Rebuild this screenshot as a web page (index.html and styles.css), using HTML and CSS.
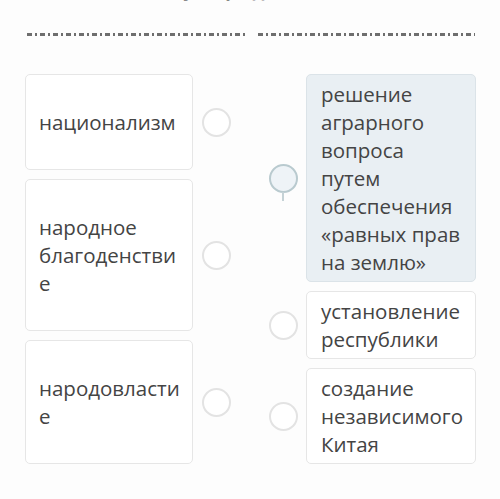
FILE: index.html
```html
<!DOCTYPE html>
<html lang="ru">
<head>
    <meta charset="UTF-8">
    <title>Сопоставьте</title>
    <link rel="stylesheet" href="styles.css">
</head>
<body>
    <div class="top">
        <div class="title">Сопоставьте утверждения</div>
        <div class="rule">
            <span class="dash"></span>
            <span class="dash"></span>
        </div>
    </div>
    <div class="board">
        <div class="column">
            <div class="row">
                <div class="card h1">национализм</div>
                <span class="dot"></span>
            </div>
            <div class="row">
                <div class="card h2">народное благоденствие</div>
                <span class="dot"></span>
            </div>
            <div class="row">
                <div class="card h3">народовластие</div>
                <span class="dot"></span>
            </div>
        </div>
        <div class="column right">
            <div class="row">
                <span class="dot active"></span>
                <div class="card wide selected">решение аграрного вопроса путем обеспечения «равных прав на землю»</div>
            </div>
            <div class="row">
                <span class="dot"></span>
                <div class="card wide">установление республики</div>
            </div>
            <div class="row">
                <span class="dot"></span>
                <div class="card wide">создание независимого Китая</div>
            </div>
        </div>
    </div>
</body>
</html>
```
FILE: styles.css
```css
body {
    margin: 0;
    background: #fdfdfd;
    font-family: "Open Sans", "Noto Sans", sans-serif;
    color: #444;
}

.top {
    height: 74px;
    overflow: hidden;
}

.title {
    margin-top: -20px;
    padding-left: 60px;
    font-size: 18px;
    font-weight: bold;
    line-height: 20px;
    color: #888;
}

.rule {
    display: flex;
    gap: 13px;
    padding: 33px 25px 0 27px;
}

.dash {
    flex: 1;
    height: 3px;
    background: repeating-linear-gradient(90deg, #555 0 5px, transparent 5px 8px, #555 8px 10px, transparent 10px 13px);
    opacity: 0.85;
}

.board {
    display: flex;
    justify-content: space-between;
    padding: 0 24px 0 25px;
}

.column {
    display: flex;
    flex-direction: column;
    gap: 9px;
}

.row {
    display: flex;
    align-items: center;
    gap: 9px;
}

.right .row {
    gap: 8px;
}

.card {
    box-sizing: border-box;
    width: 168px;
    padding: 5px 6px 5px 13px;
    display: flex;
    align-items: center;
    background: #fff;
    border: 1px solid #e6e6e6;
    border-radius: 5px;
    font-size: 20.5px;
    line-height: 28px;
    overflow-wrap: anywhere;
}

.h1 { height: 96px; }
.h2 { height: 152px; }
.h3 { height: 124px; }

.wide {
    width: 170px;
    padding-left: 14px;
    padding-right: 11px;
}

.selected {
    background: #e9eff3;
    border-color: #dbe3e8;
}

.dot {
    position: relative;
    box-sizing: border-box;
    width: 29px;
    height: 29px;
    border: 2px solid #e3e3e3;
    border-radius: 50%;
    background: #fff;
}

.dot.active {
    border-color: #b9cacf;
    background: #eef3f7;
}

.dot.active::after {
    content: "";
    position: absolute;
    left: 11px;
    top: 26px;
    width: 2px;
    height: 9px;
    background: #c5d2d6;
}
```
